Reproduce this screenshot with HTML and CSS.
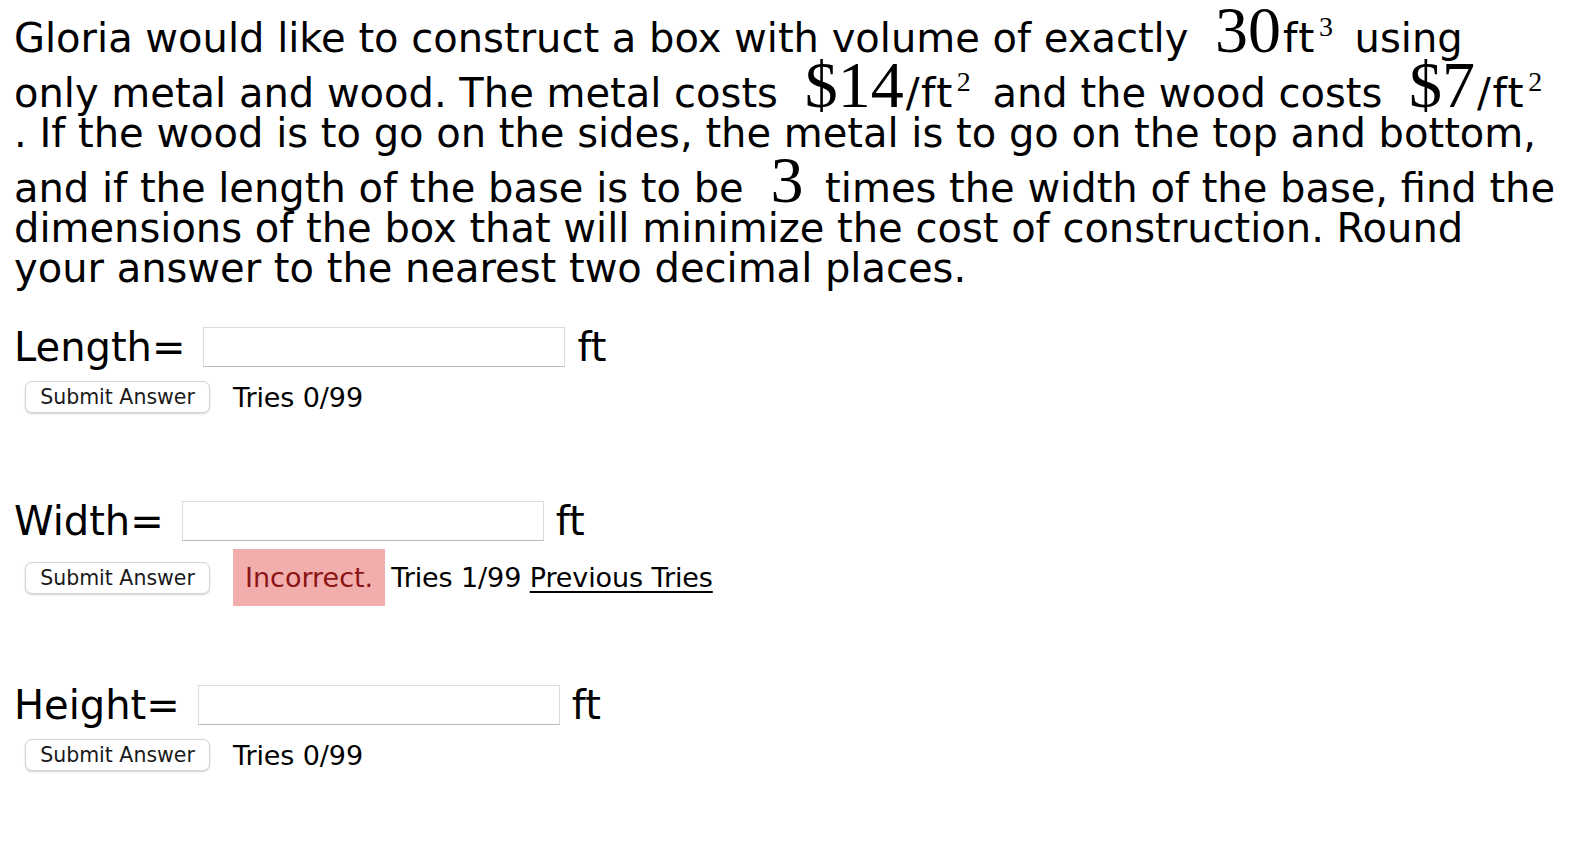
FILE: index.html
```html
<!DOCTYPE html>
<html lang="en">
<head>
<meta charset="utf-8">
<title>Box problem</title>
<link rel="stylesheet" href="styles.css">
</head>
<body>
<div class="question">
  <p class="problem">Gloria would like to construct a box with volume of exactly <span class="math"><span class="mn">30</span><span class="mu">ft</span><span class="sup">3</span></span> using only metal and wood. The metal costs <span class="math"><span class="mn">$14</span><span class="mu">/ft</span><span class="sup">2</span></span> and the wood costs <span class="math"><span class="mn">$7</span><span class="mu">/ft</span><span class="sup">2</span></span>. If the wood is to go on the sides, the metal is to go on the top and bottom, and if the length of the base is to be <span class="math"><span class="mn">3</span></span> times the width of the base, find the dimensions of the box that will minimize the cost of construction. Round your answer to the nearest two decimal places.</p>

  <div class="part">
    <div class="answer-line">
      <span class="label">Length=</span>
      <input class="answer" type="text">
      <span class="unit">ft</span>
    </div>
    <div class="submit-row">
      <button class="submit" type="button">Submit Answer</button>
      <span class="tries">Tries 0/99</span>
    </div>
  </div>

  <div class="part">
    <div class="answer-line">
      <span class="label">Width=</span>
      <input class="answer" type="text">
      <span class="unit">ft</span>
    </div>
    <div class="submit-row">
      <button class="submit" type="button">Submit Answer</button>
      <span class="feedback">Incorrect.</span>
      <span class="tries">Tries 1/99 <a class="prev" href="#">Previous Tries</a></span>
    </div>
  </div>

  <div class="part">
    <div class="answer-line">
      <span class="label">Height=</span>
      <input class="answer" type="text">
      <span class="unit">ft</span>
    </div>
    <div class="submit-row">
      <button class="submit" type="button">Submit Answer</button>
      <span class="tries">Tries 0/99</span>
    </div>
  </div>
</div>
</body>
</html>
```

FILE: styles.css
```css
html, body {
  background: #ffffff;
}
body {
  margin: 3px 8px 8px 8px;
  color: #000000;
  font-family: "DejaVu Sans", Verdana, sans-serif;
}
.problem {
  margin: 0;
  padding: 0 5px 0 6px;
  font-size: 40px;
  line-height: 40px;
}
.math {
  display: inline-block;
  margin: 0 9px 0 14px;
  white-space: nowrap;
}
.mn {
  font-family: "Liberation Serif", "Times New Roman", serif;
  font-size: 66px;
  line-height: 53px;
}
.mu {
  margin-left: 2px;
  font-size: 41px;
  letter-spacing: 1.5px;
}
.sup {
  margin-left: 3px;
  font-family: "Liberation Serif", "Times New Roman", serif;
  font-size: 28px;
  vertical-align: 16px;
  line-height: 0;
}
.part {
  margin-top: 39px;
}
.part + .part {
  margin-top: 82px;
}
.part + .part + .part {
  margin-top: 79px;
}
.answer-line {
  display: flex;
  align-items: center;
  height: 40px;
  padding-left: 6px;
  font-size: 40px;
}
.label {
  margin-right: 18px;
}
.answer {
  width: 362px;
  height: 40px;
  box-sizing: border-box;
  margin: 0 12px 0 0;
  border: 1px solid #dcdcdc;
  border-bottom-color: #b9b9b9;
  border-radius: 0;
  background: #ffffff;
  padding: 0 6px;
}
.submit-row {
  display: flex;
  align-items: center;
  min-height: 44px;
  margin-top: 8px;
  padding-left: 17px;
  font-size: 27px;
}
.submit {
  height: 32px;
  width: 185px;
  margin: 0 23px 0 0;
  padding: 0;
  border: 1px solid #d4d4d4;
  border-radius: 7px;
  background: #ffffff;
  box-shadow: 0 1px 2px rgba(0, 0, 0, 0.18);
  color: #1a1a1a;
  font-family: "DejaVu Sans", Verdana, sans-serif;
  font-size: 20.5px;
}
.feedback {
  display: flex;
  align-items: center;
  height: 57px;
  padding: 0 12px;
  margin-right: 6px;
  background: #f2adad;
  color: #8a1414;
}
.tries {
  letter-spacing: -0.1px;
}
.prev {
  color: #000000;
  text-decoration: underline;
  text-underline-offset: 4px;
}
```
